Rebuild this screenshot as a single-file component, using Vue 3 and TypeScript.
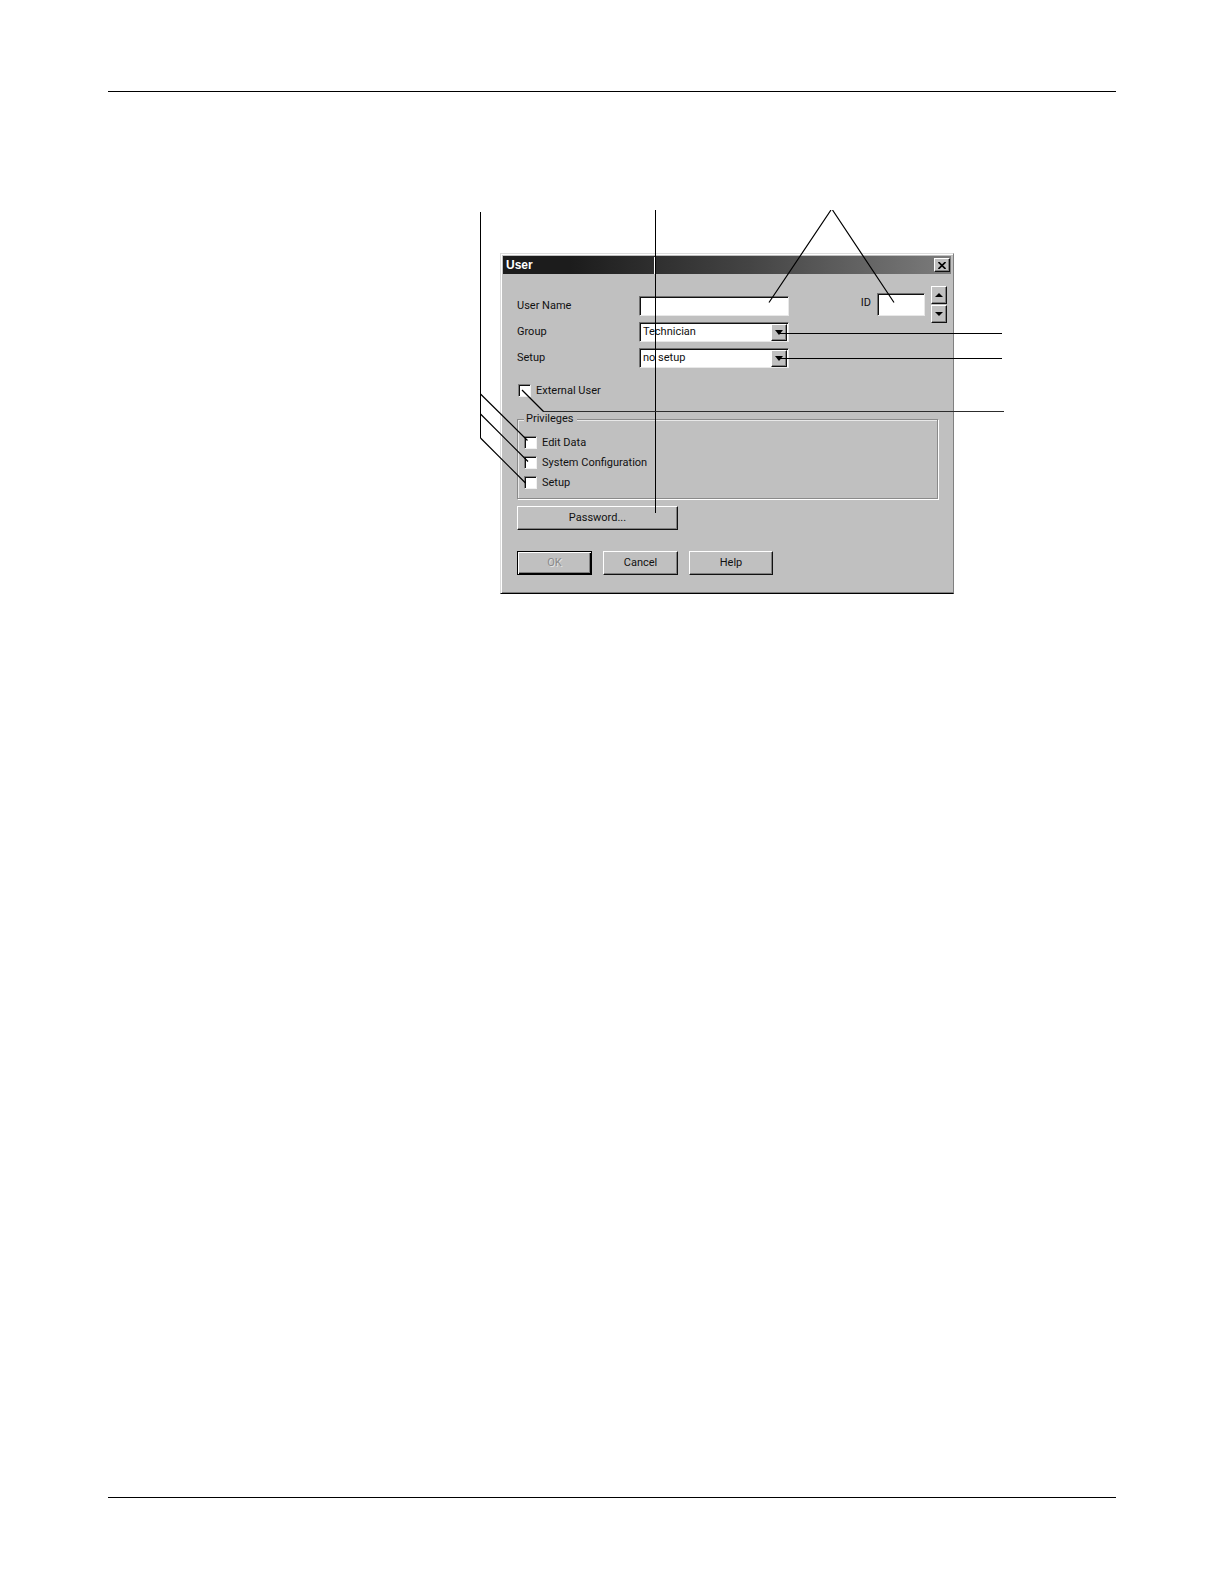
<script setup lang="ts">
import { ref } from 'vue'

const userName = ref<string>('')
const userId = ref<string>('')
const group = ref<string>('Technician')
const setup = ref<string>('no setup')
const external = ref<boolean>(false)

interface Privilege {
  id: string
  label: string
  granted: boolean
}

const privileges = ref<Privilege[]>([
  { id: 'edit-data', label: 'Edit Data', granted: false },
  { id: 'system-configuration', label: 'System Configuration', granted: false },
  { id: 'setup-privilege', label: 'Setup', granted: false },
])
</script>

<template>
  <main class="page">
    <figure class="figure">
      <section class="dialog" role="dialog" aria-labelledby="dialog-title">
        <header class="titlebar">
          <h1 id="dialog-title" class="title">User</h1>
          <button type="button" class="raised close" aria-label="Close">
            <svg width="8" height="7" viewBox="0 0 8 7" aria-hidden="true">
              <path d="M0.5 0L7.5 7M7.5 0L0.5 7" stroke="#000" stroke-width="1.6" />
            </svg>
          </button>
        </header>

        <form class="body" @submit.prevent>
          <div class="top">
            <div class="fields">
              <label for="user-name">User Name</label>
              <input id="user-name" v-model="userName" type="text" class="sunken" />
              <label for="group">Group</label>
              <div class="combo">
                <select id="group" v-model="group" class="sunken">
                  <option>Technician</option>
                </select>
                <span class="raised arrow" aria-hidden="true">
                  <svg width="8" height="5" viewBox="0 0 8 5"><path d="M0 0H8L4 5Z" /></svg>
                </span>
              </div>
              <label for="setup">Setup</label>
              <div class="combo">
                <select id="setup" v-model="setup" class="sunken">
                  <option>no setup</option>
                </select>
                <span class="raised arrow" aria-hidden="true">
                  <svg width="8" height="5" viewBox="0 0 8 5"><path d="M0 0H8L4 5Z" /></svg>
                </span>
              </div>
            </div>

            <div class="identity">
              <label for="user-id">ID</label>
              <input id="user-id" v-model="userId" type="text" class="sunken" />
              <div class="spinner">
                <button type="button" class="raised" aria-label="Next ID">
                  <svg width="8" height="4" viewBox="0 0 8 4" aria-hidden="true"><path d="M0 4H8L4 0Z" /></svg>
                </button>
                <button type="button" class="raised" aria-label="Previous ID">
                  <svg width="8" height="4" viewBox="0 0 8 4" aria-hidden="true"><path d="M0 0H8L4 4Z" /></svg>
                </button>
              </div>
            </div>
          </div>

          <label class="check external">
            <input v-model="external" type="checkbox" />
            <span>External User</span>
          </label>

          <fieldset class="privileges">
            <legend>Privileges</legend>
            <label v-for="item in privileges" :key="item.id" class="check">
              <input v-model="item.granted" type="checkbox" />
              <span>{{ item.label }}</span>
            </label>
          </fieldset>

          <button type="button" class="raised push password">Password...</button>

          <div class="actions">
            <button type="submit" class="raised push ok" disabled>OK</button>
            <button type="button" class="raised push">Cancel</button>
            <button type="button" class="raised push help">Help</button>
          </div>
        </form>
      </section>

      <!-- Leader lines drawn over the dialog -->
      <svg class="leaders" width="526" height="304" viewBox="0 0 526 304" aria-hidden="true">
        <path class="halo" d="M174.5 47V64" />
        <g class="straight">
          <path d="M0.5 2V228" />
          <path d="M175.5 0V303" />
          <path d="M299 123.5H522" />
          <path d="M299 148.5H522" />
          <path class="soft" d="M63 201.5H524" />
        </g>
        <path d="M0.5 184L47.5 230.5M0.5 204L48 251.5M0.5 228L45.5 273" />
        <path d="M42 180L63.5 201.5" />
        <path d="M351 0L289 92.500M352.500 0L414 92.500" />
      </svg>
    </figure>
  </main>
</template>

<style>
body {
  margin: 0;
  background: #fff;
}
</style>

<style scoped>
.page {
  box-sizing: border-box;
  min-height: 100vh;
  padding: 91px 108px 86px;
  display: flex;
  flex-direction: column;
  font-family: Roboto, "Liberation Sans", sans-serif;
  font-size: 11px;
  line-height: 14px;
  color: #111;
}

.page::before,
.page::after {
  content: "";
  height: 1px;
  background: #000;
}

.page::after {
  margin-top: auto;
}

.figure {
  position: relative;
  width: 454px;
  margin: 118px 0 0 372px;
  padding: 43px 50px 0 20px;
}

.leaders {
  position: absolute;
  top: 0;
  left: 0;
  pointer-events: none;
  fill: none;
  stroke: #000;
  stroke-width: 1.2;
}

.straight {
  stroke-width: 1;
  shape-rendering: crispEdges;
}

.soft {
  stroke: #2c2c2c;
}

.halo {
  stroke: #fff;
  stroke-width: 1;
  shape-rendering: crispEdges;
}

.dialog {
  box-sizing: border-box;
  padding: 2px;
  border: 1px solid;
  border-color: #dcdcdc #808080 #000 #dcdcdc;
  background: #c0c0c0;
  box-shadow: inset 1px 1px 0 #fff, inset 0 -1px 0 #808080;
}

.titlebar {
  display: flex;
  align-items: center;
  justify-content: space-between;
  height: 18px;
  padding: 0 1px 0 3px;
  background: linear-gradient(90deg, #1c1c1c 15%, #444 55%, #7c7c7c);
}

.title {
  margin: 0;
  font: bold 12px/18px "Liberation Sans", Arial, sans-serif;
  color: #fff;
}

.raised {
  box-sizing: border-box;
  display: flex;
  align-items: center;
  justify-content: center;
  margin: 0;
  padding: 0;
  border: 1px solid;
  border-color: #fff #111 #111 #fff;
  border-radius: 0;
  background: #c0c0c0;
  box-shadow: inset -1px -1px 0 #808080;
  font: inherit;
  color: #111;
}

.close {
  width: 16px;
  height: 14px;
}

.body {
  padding: 12px 4px 16px 14px;
}

.top {
  display: flex;
  justify-content: space-between;
}

.fields {
  display: grid;
  grid-template-columns: 122px 150px;
  grid-auto-rows: 20px;
  row-gap: 6px;
  align-items: center;
  margin-top: 10px;
}

.sunken {
  box-sizing: border-box;
  width: 100%;
  height: 20px;
  margin: 0;
  padding: 0 3px;
  border: 1px solid;
  border-color: #707070 #e8e8e8 #e8e8e8 #707070;
  border-radius: 0;
  background: #fff;
  box-shadow: inset 1px 1px 0 #111;
  font: inherit;
  color: #111;
  appearance: none;
}

.combo {
  position: relative;
}

.combo .sunken {
  display: block;
}

.arrow {
  position: absolute;
  top: 2px;
  right: 2px;
  width: 16px;
  height: 17px;
  pointer-events: none;
}

.identity {
  display: flex;
  align-items: flex-start;
}

.identity label {
  margin: 10px 6px 0 0;
}

.identity .sunken {
  width: 48px;
  height: 23px;
  margin: 7px 6px 0 0;
}

.spinner {
  display: flex;
  flex-direction: column;
  gap: 1px;
}

.spinner .raised {
  width: 16px;
  height: 18px;
}

.check {
  display: flex;
  align-items: center;
  gap: 5px;
  height: 13px;
}

.check input {
  box-sizing: border-box;
  width: 13px;
  height: 13px;
  margin: 0;
  border: 1px solid;
  border-color: #808080 #f0f0f0 #f0f0f0 #808080;
  background: #fff;
  box-shadow: inset 1px 1px 0 #111;
  appearance: none;
}

.check input:checked {
  background: #111 content-box;
  padding: 3px;
}

.external {
  margin: 16px 0 0 1px;
}

.privileges {
  display: flex;
  flex-direction: column;
  gap: 7px;
  min-width: 0;
  margin: 15px 9px 0 0;
  padding: 10px 6px 9px;
  border: 1px solid #8a8a8a;
  box-shadow: 1px 1px 0 #fff, inset 1px 1px 0 #e8e8e8;
}

.privileges legend {
  padding: 0 3px 0 2px;
  background: #c0c0c0;
}

.push {
  width: 75px;
  height: 24px;
}

.password {
  width: 161px;
  margin-top: 7px;
}

.actions {
  display: flex;
  gap: 11px;
  margin-top: 21px;
}

.help {
  width: 84px;
}

.ok {
  border-color: #000;
  box-shadow: inset 1px 1px 0 #fff, inset -1px -1px 0 #000, inset -2px -2px 0 #808080;
  color: #8a8a8a;
  text-shadow: 1px 1px 0 #e4e4e4;
}
</style>
